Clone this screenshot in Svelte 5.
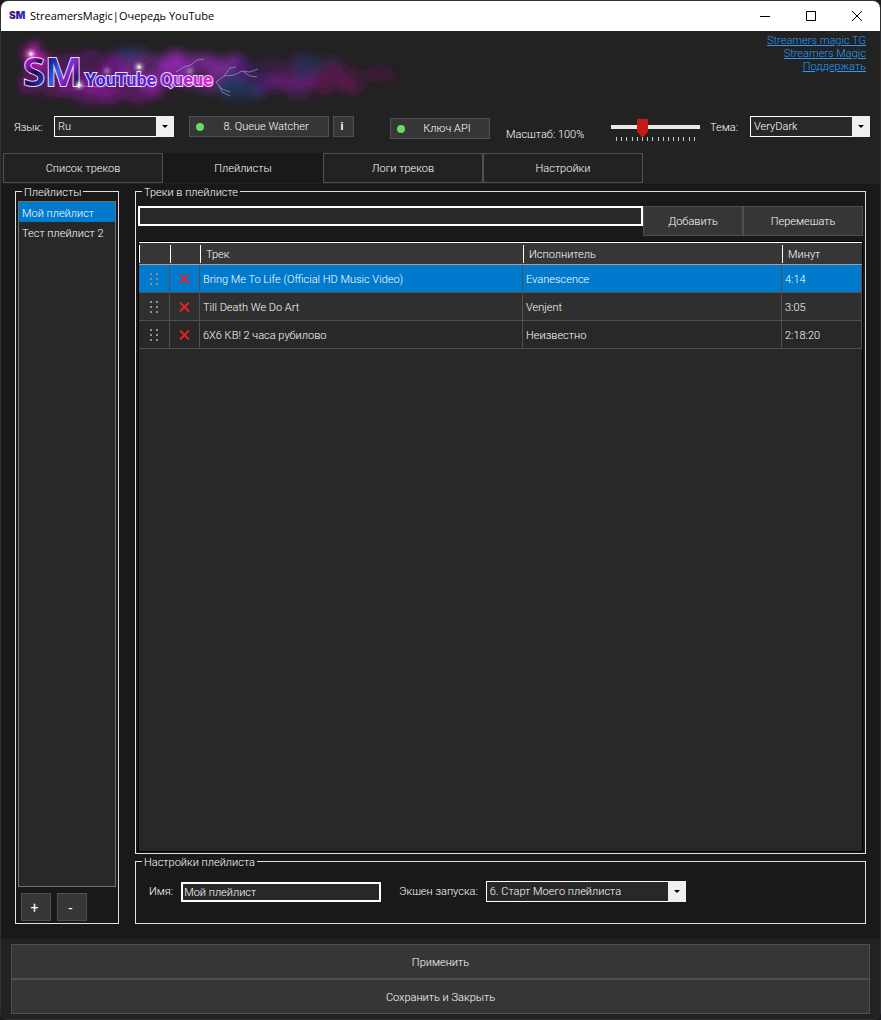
<script lang="ts">
	interface Track {
		title: string;
		artist: string;
		length: string;
	}

	const links = ['Streamers magic TG', 'Streamers Magic', 'Поддержать'];
	const tabs = ['Список треков', 'Плейлисты', 'Логи треков', 'Настройки'];
	const playlists = ['Мой плейлист', 'Тест плейлист 2'];
	const tracks: Track[] = [
		{ title: 'Bring Me To Life (Official HD Music Video)', artist: 'Evanescence', length: '4:14' },
		{ title: 'Till Death We Do Art', artist: 'Venjent', length: '3:05' },
		{ title: '6Х6 КВ! 2 часа рубилово', artist: 'Неизвестно', length: '2:18:20' }
	];
	const ticks = Array.from({ length: 16 });

	let activeTab = $state(1);
	let activePlaylist = $state(0);
	let activeTrack = $state(0);
	let name = $state('Мой плейлист');
	let newTrack = $state('');
	let scale = $state(5);
</script>

<div class="window">
	<header class="titlebar">
		<svg width="20" height="16" viewBox="0 0 20 16" aria-hidden="true">
			<defs>
				<linearGradient id="icon-fill" x1="0" x2="1">
					<stop offset="0" stop-color="#8a1696" />
					<stop offset="0.4" stop-color="#1c0a5a" />
					<stop offset="0.7" stop-color="#2337c8" />
					<stop offset="1" stop-color="#5a1490" />
				</linearGradient>
			</defs>
			<text x="0" y="11" class="icon-text" fill="url(#icon-fill)">SM</text>
		</svg>
		<h1>StreamersMagic|Очередь YouTube</h1>
		<div class="caption">
			<button aria-label="Свернуть">
				<svg width="12" height="12" viewBox="0 0 12 12"><path d="M1 5.500h10" /></svg>
			</button>
			<button aria-label="Развернуть">
				<svg width="12" height="12" viewBox="0 0 12 12"><path d="M1.500 .5h9v9h-9z" /></svg>
			</button>
			<button aria-label="Закрыть">
				<svg width="12" height="12" viewBox="0 0 12 12"><path d="M1 0l10 10M11 0L1 10" /></svg>
			</button>
		</div>
	</header>

	<div class="brand">
		<svg class="logo" width="400" height="76" viewBox="0 0 400 76" role="img" aria-label="SM YouTube Queue">
			<defs>
				<filter id="smoke" x="-10%" y="-50%" width="120%" height="200%">
					<feTurbulence type="fractalNoise" baseFrequency="0.05" numOctaves="4" seed="8" result="noise" />
					<feDisplacementMap in="SourceGraphic" in2="noise" scale="24" xChannelSelector="R" yChannelSelector="G" result="torn" />
					<feColorMatrix in="noise" type="matrix" values="0 0 0 0 0  0 0 0 0 0  0 0 0 0 0  0 0 2 0 -0.25" result="holes" />
					<feComposite in="torn" in2="holes" operator="in" />
					<feGaussianBlur stdDeviation="5" />
				</filter>
				<filter id="glow" x="-100%" y="-100%" width="300%" height="300%">
					<feGaussianBlur stdDeviation="2" />
				</filter>
				<linearGradient id="sm-fill" x1="0" x2="1" y1="0" y2="0.6">
					<stop offset="0" stop-color="#f41ad8" />
					<stop offset="0.2" stop-color="#b018c0" />
					<stop offset="0.38" stop-color="#1c0a50" />
					<stop offset="0.52" stop-color="#1c2ca0" />
					<stop offset="0.66" stop-color="#2a64f0" />
					<stop offset="0.8" stop-color="#8a22c8" />
					<stop offset="1" stop-color="#1c0a50" />
				</linearGradient>
				<linearGradient id="yt-fill" x1="0" x2="1">
					<stop offset="0" stop-color="#2b22c8" />
					<stop offset="0.5" stop-color="#5a22d8" />
					<stop offset="0.75" stop-color="#a822cc" />
					<stop offset="1" stop-color="#f01ed0" />
				</linearGradient>
			</defs>
			<g filter="url(#smoke)">
				<ellipse cx="26" cy="20" rx="14" ry="9" fill="#f414e0" />
				<ellipse cx="34" cy="46" rx="24" ry="14" fill="#7c1284" />
				<ellipse cx="84" cy="34" rx="42" ry="19" fill="#6a1582" />
				<ellipse cx="106" cy="54" rx="54" ry="12" fill="#7c1488" />
				<ellipse cx="150" cy="36" rx="46" ry="19" fill="#8c28aa" />
				<ellipse cx="124" cy="20" rx="14" ry="6" fill="#283c88" />
				<ellipse cx="200" cy="36" rx="34" ry="20" fill="#80269c" />
				<ellipse cx="230" cy="50" rx="30" ry="12" fill="#243c78" />
				<ellipse cx="256" cy="38" rx="32" ry="17" fill="#4b1c74" />
				<ellipse cx="286" cy="42" rx="30" ry="17" fill="#601a70" />
				<ellipse cx="306" cy="30" rx="22" ry="9" fill="#2c3068" />
				<ellipse cx="330" cy="44" rx="24" ry="14" fill="#5c1850" />
				<ellipse cx="368" cy="38" rx="16" ry="10" fill="#481640" />
			</g>
			<g class="bolt">
				<path d="M206 46l8-6 6-8 6-1M214 40l10-1 8-4 8 1 8-3M232 35l8 5 7 1M206 46l6 7 8 3M209 49l3 7 8 4" />
				<path d="M166 36l8-5 7-2 6-5 7-1M70 50l22 1 16-5 24 5" />
			</g>
			<text x="13" y="50" class="logo-sm" fill="url(#sm-fill)">SM</text>
			<text x="75" y="50" class="logo-yt" fill="url(#yt-fill)">YouTube Queue</text>
			<g fill="#fff" filter="url(#glow)">
				<circle cx="21" cy="18" r="3" />
				<circle cx="69" cy="49" r="3" />
				<circle cx="129" cy="31" r="3" />
				<circle cx="97" cy="35" r="2" />
				<circle cx="180" cy="35" r="2" />
			</g>
			<path class="spark" d="M69 46v6M66 49h6M21 16v4M19 18h4M129 29v4M127 31h4" />
		</svg>
		<nav class="links">
			{#each links as link}
				<a href="#top">{link}</a>
			{/each}
		</nav>
	</div>

	<div class="toolbar">
		<label for="lang">Язык:</label>
		<span class="select">
			<select id="lang"><option>Ru</option></select>
		</span>
		<button class="status watcher"><span class="led"></span><span class="caption-text">8. Queue Watcher</span></button>
		<button class="info" aria-label="Информация">i</button>
		<button class="status key"><span class="led"></span><span class="caption-text">Ключ API</span></button>
		<label class="scale-label" for="scale">Масштаб: 100%</label>
		<div class="slider">
			<input id="scale" type="range" min="0" max="15" bind:value={scale} />
			<div class="ticks" aria-hidden="true">
				{#each ticks as _}<i></i>{/each}
			</div>
		</div>
		<label class="theme-label" for="theme">Тема:</label>
		<span class="select">
			<select id="theme"><option>VeryDark</option></select>
		</span>
	</div>

	<div class="tabs" role="tablist">
		{#each tabs as tab, i}
			<button role="tab" aria-selected={i === activeTab} class:active={i === activeTab} onclick={() => (activeTab = i)}>
				{tab}
			</button>
		{/each}
	</div>

	<main>
		<fieldset class="playlists">
			<legend>Плейлисты</legend>
			<div class="list" role="listbox" aria-label="Плейлисты">
				{#each playlists as playlist, i}
					<button
						role="option"
						aria-selected={i === activePlaylist}
						class:selected={i === activePlaylist}
						onclick={() => (activePlaylist = i)}>{playlist}</button
					>
				{/each}
			</div>
			<div class="list-actions">
				<button aria-label="Добавить плейлист">+</button>
				<button aria-label="Удалить плейлист">-</button>
			</div>
		</fieldset>

		<div class="details">
			<fieldset class="tracks">
				<legend>Треки в плейлисте</legend>
				<div class="add-row">
					<input type="text" aria-label="Ссылка на трек" bind:value={newTrack} />
					<button class="add">Добавить</button>
					<button class="shuffle">Перемешать</button>
				</div>
				<div class="grid">
					<table>
						<colgroup>
							<col class="col-grip" />
							<col class="col-remove" />
							<col />
							<col class="col-artist" />
							<col class="col-length" />
						</colgroup>
						<thead>
							<tr>
								<th></th>
								<th></th>
								<th>Трек</th>
								<th>Исполнитель</th>
								<th>Минут</th>
							</tr>
						</thead>
						<tbody>
							{#each tracks as track, i}
								<tr class:selected={i === activeTrack} onclick={() => (activeTrack = i)}>
									<td class="icon">
										<svg class="grip" width="10" height="14" viewBox="0 0 10 14" aria-hidden="true">
											<path d="M1 1h2v2H1zM7 1h2v2H7zM1 6h2v2H1zM7 6h2v2H7zM1 11h2v2H1zM7 11h2v2H7z" />
										</svg>
									</td>
									<td class="icon">
										<button class="remove" aria-label="Удалить">
											<svg width="12" height="12" viewBox="0 0 12 12"><path d="M1 1.500l9 9M10 1.500l-9 9" /></svg>
										</button>
									</td>
									<td>{track.title}</td>
									<td>{track.artist}</td>
									<td>{track.length}</td>
								</tr>
							{/each}
						</tbody>
					</table>
				</div>
			</fieldset>

			<fieldset class="settings">
				<legend>Настройки плейлиста</legend>
				<div class="settings-row">
					<label for="name">Имя:</label>
					<input id="name" type="text" bind:value={name} />
					<label class="action-label" for="action">Экшен запуска:</label>
					<span class="select action">
						<select id="action"><option>6. Старт Моего плейлиста</option></select>
					</span>
				</div>
			</fieldset>
		</div>
	</main>

	<footer>
		<button>Применить</button>
		<button>Сохранить и Закрыть</button>
	</footer>
</div>

<style>
	:global(body) {
		background: #1b1b20;
	}

	.window {
		--face: #363636;
		--edge: #505050;
		--field: #282828;
		--ink: #fff;
		--accent: #007acc;
		display: flex;
		flex-direction: column;
		box-sizing: border-box;
		min-height: 100vh;
		border: 1px solid #303030;
		border-radius: 8px;
		overflow: hidden;
		background: #222;
		color: var(--ink);
		font: 300 11px/14px Roboto, 'Noto Sans', sans-serif;
	}

	button,
	input,
	select {
		box-sizing: border-box;
		margin: 0;
		padding: 0;
		font: inherit;
		line-height: 14px;
		color: inherit;
		border-radius: 0;
		outline: none;
	}

	button {
		padding-top: 1px;
		background: var(--face);
		border: 1px solid var(--edge);
	}

	/* title bar */
	.titlebar {
		display: flex;
		align-items: center;
		height: 30px;
		padding-left: 8px;
		background: #fff;
		color: #000;
	}

	.icon-text {
		font: 900 10px Inter, sans-serif;
	}

	h1 {
		flex: 1;
		margin: 0 0 0 1px;
		font: 400 11px/16px 'Open Sans', 'Noto Sans', sans-serif;
	}

	.caption {
		display: flex;
	}

	.caption button {
		display: grid;
		place-items: center;
		width: 46px;
		height: 30px;
		border: 0;
		background: none;
	}

	.caption svg {
		fill: none;
		stroke: #000;
	}

	/* brand */
	.brand {
		display: flex;
		justify-content: space-between;
		height: 85px;
	}

	.logo {
		margin: 5px 0 0 9px;
	}

	.logo text {
		stroke: #f0d8ff;
		paint-order: stroke;
		stroke-width: 2px;
	}

	.logo-sm {
		font: 600 40px 'Noto Sans', sans-serif;
	}

	.logo-yt {
		font: 700 18px Roboto, sans-serif;
	}

	.bolt {
		fill: none;
		stroke: #b9a6e0;
		opacity: 0.6;
	}

	.spark {
		stroke: #fff;
		opacity: 0.8;
	}

	.links {
		display: flex;
		flex-direction: column;
		align-items: flex-end;
		padding: 3px 14px 0 0;
		line-height: 13px;
	}

	.links a {
		color: #2a9cf8;
	}

	/* toolbar */
	.toolbar {
		display: flex;
		align-items: flex-start;
		box-sizing: border-box;
		height: 37px;
		padding: 0 10px 0 13px;
		line-height: 23px;
	}

	.select {
		position: relative;
		box-sizing: border-box;
		width: 120px;
		margin-left: 8px;
	}

	.select select {
		display: block;
		width: 100%;
		height: 21px;
		padding: 1px 20px 0 3px;
		border: 1px solid #fff;
		background: var(--field);
		appearance: none;
	}

	.select::before {
		content: '';
		position: absolute;
		inset: 0 0 0 auto;
		width: 18px;
		height: 21px;
		background: #f0f0f0;
		pointer-events: none;
	}

	.select::after {
		content: '';
		position: absolute;
		top: 9px;
		right: 6px;
		border: 3px solid transparent;
		border-top-color: #000;
		border-bottom: 0;
		pointer-events: none;
	}

	.toolbar > label {
		width: 32px;
		white-space: nowrap;
	}

	.status {
		display: flex;
		align-items: center;
		height: 21px;
		padding-left: 6px;
	}

	.caption-text {
		flex: 1;
		text-align: center;
	}

	.led {
		width: 8px;
		height: 8px;
		border-radius: 50%;
		background: #66dc66;
	}

	.watcher {
		width: 140px;
		margin-left: 15px;
	}

	.info {
		width: 21px;
		height: 21px;
		margin-left: 4px;
		padding-right: 3px;
		font-weight: 700;
	}

	.key {
		width: 100px;
		margin: 2px 0 0 36px;
	}

	.toolbar > .scale-label {
		width: 80px;
		margin: 7px 0 0 16px;
	}

	.slider {
		width: 89px;
		margin-left: 25px;
	}

	.slider input {
		display: block;
		width: 100%;
		height: 21px;
		background: none;
		appearance: none;
	}

	.slider input::-webkit-slider-runnable-track {
		height: 4px;
		background: #e8e8e8;
	}

	.slider input::-webkit-slider-thumb {
		width: 11px;
		height: 19px;
		margin-top: -6px;
		background: #c41c14;
		clip-path: polygon(0 0, 100% 0, 100% 70%, 50% 100%, 0 70%);
		appearance: none;
	}

	.ticks {
		display: flex;
		justify-content: space-between;
		padding: 0 5px;
	}

	.ticks i {
		width: 1px;
		height: 4px;
		background: #c8c8c8;
	}

	.toolbar > .theme-label {
		margin-left: auto;
	}

	/* tabs */
	.tabs {
		display: flex;
		padding: 0 0 1px 2px;
	}

	.tabs button {
		width: 160px;
		height: 30px;
		padding-top: 2px;
		background: #222;
	}

	.tabs .active {
		background: #191919;
		border-color: #191919;
	}

	/* content */
	main {
		flex: 1;
		display: flex;
		gap: 16px;
		padding: 1px 14px 15px;
		background: #191919;
	}

	fieldset {
		display: flex;
		flex-direction: column;
		box-sizing: border-box;
		min-width: 0;
		margin: 0;
		padding: 0;
		border: 1px solid #e0e0e0;
	}

	legend {
		height: 13px;
		margin-left: 4px;
		padding: 0 2px;
		line-height: 15px;
	}

	.playlists {
		width: 104px;
		flex: none;
		padding: 3px 2px 2px 2px;
	}

	.list {
		flex: 1;
		display: flex;
		flex-direction: column;
		border: 1px solid #707070;
		background: var(--field);
	}

	.list button {
		height: 20px;
		padding: 3px 3px 0;
		border: 0;
		background: none;
		text-align: left;
		white-space: nowrap;
	}

	.list .selected {
		background: var(--accent);
	}

	.list-actions {
		display: flex;
		gap: 6px;
		padding: 6px 3px 0;
	}

	.list-actions button {
		width: 30px;
		height: 28px;
		padding-right: 3px;
		font-size: 14px;
		font-weight: 400;
	}

	.details {
		flex: 1;
		display: flex;
		flex-direction: column;
		min-width: 0;
	}

	.tracks {
		flex: 1;
		padding: 8px 2px 1px;
	}

	input[type='text'] {
		height: 20px;
		padding: 1px 1px 0;
		border: 2px solid #fff;
		background: var(--field);
	}

	.add-row {
		display: flex;
		align-items: flex-start;
	}

	.add-row input {
		flex: 1;
		min-width: 0;
	}

	.add-row button {
		height: 30px;
	}

	.add {
		width: 100px;
	}

	.shuffle {
		width: 120px;
	}

	.grid {
		flex: 1;
		margin-top: 5px;
		border: 1px solid #000;
		background: var(--field);
	}

	table {
		width: 100%;
		border-collapse: separate;
		border-spacing: 0;
		table-layout: fixed;
	}

	.col-grip {
		width: 31px;
	}

	.col-remove {
		width: 30px;
	}

	.col-artist {
		width: 259px;
	}

	.col-length {
		width: 80px;
	}

	th {
		box-sizing: border-box;
		height: 23px;
		padding: 3px 0 0 6px;
		border-top: 1px solid #fff;
		border-bottom: 1px solid #a0a0a0;
		background: linear-gradient(#fff, #fff) left 2px / 1px 18px no-repeat var(--face);
		font-weight: 300;
		text-align: left;
	}

	td {
		box-sizing: border-box;
		height: 28px;
		padding: 2px 3px 0;
		border-right: 1px solid var(--edge);
		border-bottom: 1px solid var(--edge);
	}

	tbody tr:nth-child(even) {
		background: #2f2f2f;
	}

	tbody tr.selected {
		background: var(--accent);
	}

	td.icon {
		padding: 0;
		text-align: center;
		line-height: 0;
	}

	.grip {
		fill: #8e8e8e;
	}

	.remove {
		padding: 0;
		border: 0;
		background: none;
		line-height: 0;
	}

	.remove svg {
		fill: none;
		stroke: #e02424;
		stroke-width: 2;
	}

	.settings {
		margin-top: 1px;
		padding: 13px 2px 21px;
	}

	.settings-row {
		display: flex;
		align-items: center;
		padding: 0 11px;
	}

	.settings-row input {
		width: 200px;
		margin-left: 8px;
	}

	.action-label {
		margin-left: 18px;
	}

	.action {
		width: 200px;
	}

	/* footer */
	footer {
		display: flex;
		flex-direction: column;
		padding: 5px 10px;
	}

	footer button {
		height: 35px;
		padding-top: 2px;
	}
</style>
